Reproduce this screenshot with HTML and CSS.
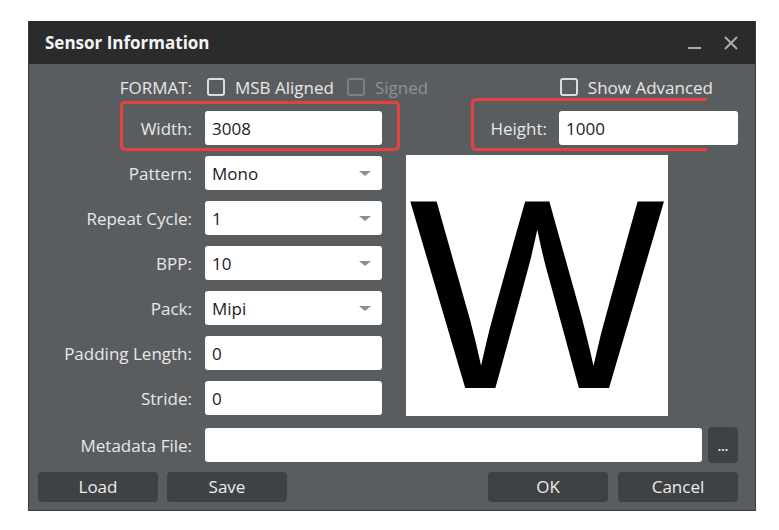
FILE: index.html
```html
<!DOCTYPE html>
<html>
<head>
<meta charset="utf-8">
<link rel="stylesheet" href="styles.css">
</head>
<body>
<div class="window">
  <div class="titlebar">
    <span class="title">Sensor Information</span>
    <div class="controls">
      <svg class="ctl-min" width="14" height="14" viewBox="0 0 14 14"><rect x="0" y="10" width="13" height="2" fill="#a9abad"/></svg>
      <svg class="ctl-close" width="14" height="14" viewBox="0 0 14 14"><path d="M1 1 L13 13 M13 1 L1 13" stroke="#a9abad" stroke-width="2"/></svg>
    </div>
  </div>
  <div class="content">
    <div class="row format-row">
      <span class="label">FORMAT:</span>
      <label class="check"><span class="box"></span>MSB Aligned</label>
      <label class="check disabled"><span class="box"></span>Signed</label>
      <label class="check advanced"><span class="box"></span>Show Advanced</label>
    </div>
    <div class="row size-row">
      <div class="wgroup">
        <span class="wlabel">Width:</span>
        <div class="field">3008</div>
      </div>
      <div class="hgroup">
        <span class="hlabel">Height:</span>
        <div class="field hfield">1000</div>
      </div>
    </div>
    <div class="main">
      <div class="fields">
        <div class="row"><span class="label">Pattern:</span><div class="field select">Mono<span class="arrow"></span></div></div>
        <div class="row"><span class="label">Repeat Cycle:</span><div class="field select">1<span class="arrow"></span></div></div>
        <div class="row"><span class="label">BPP:</span><div class="field select">10<span class="arrow"></span></div></div>
        <div class="row"><span class="label">Pack:</span><div class="field select">Mipi<span class="arrow"></span></div></div>
        <div class="row"><span class="label">Padding Length:</span><div class="field">0</div></div>
        <div class="row"><span class="label">Stride:</span><div class="field">0</div></div>
      </div>
      <div class="preview"><svg class="glyph" width="262" height="261" viewBox="0 0 262 261"><text x="131" y="233" text-anchor="middle">W</text></svg></div>
    </div>
    <div class="row meta-row">
      <span class="label">Metadata File:</span>
      <div class="field meta-field"></div>
      <button class="btn browse">...</button>
    </div>
    <div class="row button-row">
      <button class="btn action">Load</button>
      <button class="btn action">Save</button>
      <button class="btn action push">OK</button>
      <button class="btn action">Cancel</button>
    </div>
  </div>
</div>
</body>
</html>
```
FILE: styles.css
```css
* { box-sizing: border-box; }
html, body { margin: 0; padding: 0; background: #ffffff; }
body { font-family: "Open Sans", "Noto Sans", sans-serif; font-size: 17px; }

.window {
  width: 728px;
  margin: 21px 0 0 28px;
  background: #5a5d60;
  border: 1px solid #3a3b3d;
  border-top: none;
}
.titlebar {
  height: 43px;
  background: #2a2b2d;
  display: flex;
  align-items: center;
  padding: 0 17px 0 16px;
}
.title { color: #f4f4f4; font-weight: 700; font-size: 17px; }
.controls { margin-left: auto; display: flex; align-items: center; gap: 22px; }
.ctl-min { margin-top: 2px; }

.content { padding: 0 17px 8px 9px; }
.row { display: flex; align-items: center; }
.label {
  width: 154px;
  flex: none;
  text-align: right;
  color: #e8e8e8;
  margin-right: 13px;
  white-space: nowrap;
}
.field {
  width: 177px;
  height: 34px;
  background: #ffffff;
  border-radius: 3px;
  color: #222222;
  padding-left: 7px;
  display: flex;
  align-items: center;
  position: relative;
  flex: none;
}
.select .arrow {
  position: absolute;
  right: 11px;
  top: 15px;
  width: 0; height: 0;
  border-left: 6px solid transparent;
  border-right: 6px solid transparent;
  border-top: 5px solid #8d8f91;
}

.format-row { height: 34px; margin-top: 6px; }
.check { display: flex; align-items: center; color: #e8e8e8; margin-right: 13px; white-space: nowrap; }
.check .box {
  width: 18px; height: 18px;
  border: 2px solid #dcdcdc;
  border-radius: 3px;
  margin-right: 10px;
  flex: none;
}
.check.disabled { color: #8e9194; }
.check.disabled .box { border-color: #7c7f82; }
.check.advanced { margin-left: auto; margin-right: 25px; }
.format-row .label { margin-right: 15px; }

/* Width / Height rows, outlined in red */
.size-row { margin-top: -6px; align-items: flex-end; }
.wgroup {
  display: flex;
  align-items: center;
  margin-left: 82px;
  width: 280px;
  border: 3px solid #e8403e;
  border-radius: 5px;
  padding: 7px 0 3px 0;
}
.wlabel { width: 69px; text-align: right; color: #e8e8e8; margin-right: 13px; flex: none; }
.hgroup {
  display: flex;
  align-items: center;
  margin-left: auto;
  position: relative;
  padding: 13px 0 6px 19px;
}
.hgroup::before {
  content: "";
  position: absolute;
  left: 0; top: 0; bottom: 0;
  width: 233px;
  border: 3px solid #e8403e;
  border-right: none;
  border-radius: 5px 0 0 5px;
  pointer-events: none;
}
.hlabel { color: #e8e8e8; margin-right: 12px; flex: none; }
.hfield { width: 179px; }

.main { display: flex; margin-top: 4px; }
.fields { display: flex; flex-direction: column; gap: 11px; padding-top: 1px; }
.fields .row { height: 34px; }
.preview {
  width: 262px;
  height: 261px;
  margin-left: 24px;
  background: #ffffff;
}
.glyph { display: block; overflow: visible; }
.glyph text {
  font-family: "Liberation Sans", Arial, sans-serif;
  font-size: 271px;
  fill: #000000;
}

.meta-row { margin-top: 11px; height: 36px; }
.meta-field { flex: 1; width: auto; }
.btn {
  font-family: "Open Sans", "Noto Sans", sans-serif;
  font-size: 17px;
  color: #ececec;
  background: #3f4245;
  border: none;
  border-radius: 4px;
  padding: 0;
}
.browse { width: 30px; height: 36px; margin-left: 6px; font-size: 12px; font-weight: 700; line-height: 1; padding-top: 4px; }
.button-row { margin-top: 9px; gap: 9px; }
.action { width: 120px; height: 30px; line-height: 30px; }
.push { margin-left: auto; margin-right: 1px; }
```
